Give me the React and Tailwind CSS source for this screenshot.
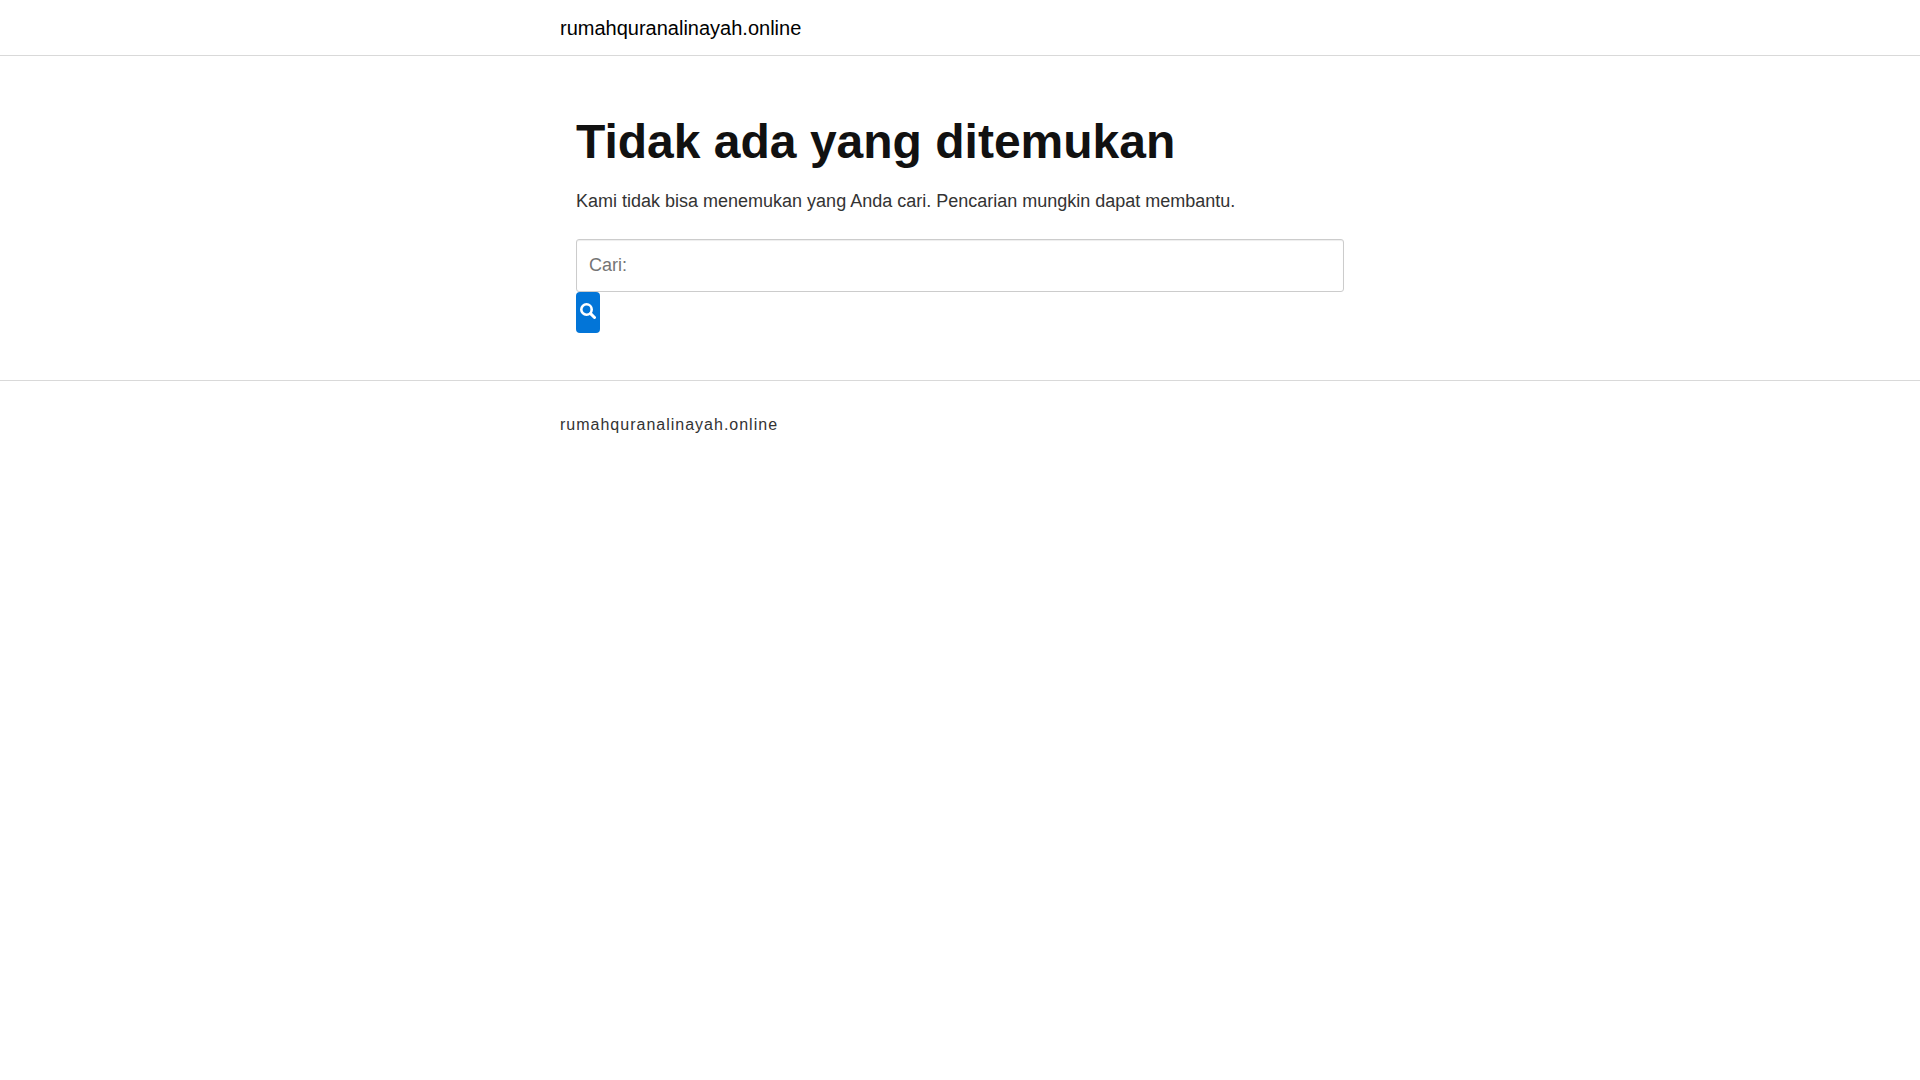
import React, { useState } from "react";

const SITE_NAME = "rumahquranalinayah.online";

function SearchForm() {
  const [query, setQuery] = useState("");

  return (
    <form role="search" onSubmit={(e) => e.preventDefault()}>
      <input
        type="search"
        aria-label="Cari"
        placeholder="Cari:"
        value={query}
        onChange={(e) => setQuery(e.target.value)}
        className="block w-full h-[53px] px-3 text-lg text-[#333] placeholder:text-[#757575] bg-white border border-[#ccc] rounded-[3px] shadow-[inset_0_1px_1px_#eee]"
      />
      <button
        type="submit"
        aria-label="Cari"
        className="flex justify-center w-6 h-[41px] pt-[11px] bg-[#0275d8] text-white rounded-sm"
      >
        <svg
          viewBox="0 0 16 16"
          className="w-4 h-4"
          fill="none"
          stroke="currentColor"
          aria-hidden="true"
        >
          <circle cx="6.5" cy="6.5" r="5.2" strokeWidth="2.6" />
          <path d="M10.6 10.6 L14.5 14.5" strokeWidth="3" strokeLinecap="round" />
        </svg>
      </button>
    </form>
  );
}

function App() {
  return (
    <div className="bg-white font-['Liberation_Sans',sans-serif] text-lg text-[#333]">
      <header className="border-b border-[#d9d9d9]">
        <div className="max-w-[800px] mx-auto pt-3 pb-[11px]">
          <a href="/" className="block text-xl leading-8 text-black">
            {SITE_NAME}
          </a>
        </div>
      </header>

      <main className="max-w-[800px] mx-auto px-4 pt-14 pb-[47px]">
        <h1 className="mb-[15px] text-5xl leading-[60px] font-bold text-[#111]">
          Tidak ada yang ditemukan
        </h1>
        <p className="mb-6 leading-7">
          Kami tidak bisa menemukan yang Anda cari. Pencarian mungkin dapat membantu.
        </p>
        <SearchForm />
      </main>

      <footer className="border-t border-[#d9d9d9]">
        <div className="max-w-[800px] mx-auto py-8">
          <a href="/" className="block text-base leading-6 tracking-[1px]">
            {SITE_NAME}
          </a>
        </div>
      </footer>
    </div>
  );
}

export default App;
